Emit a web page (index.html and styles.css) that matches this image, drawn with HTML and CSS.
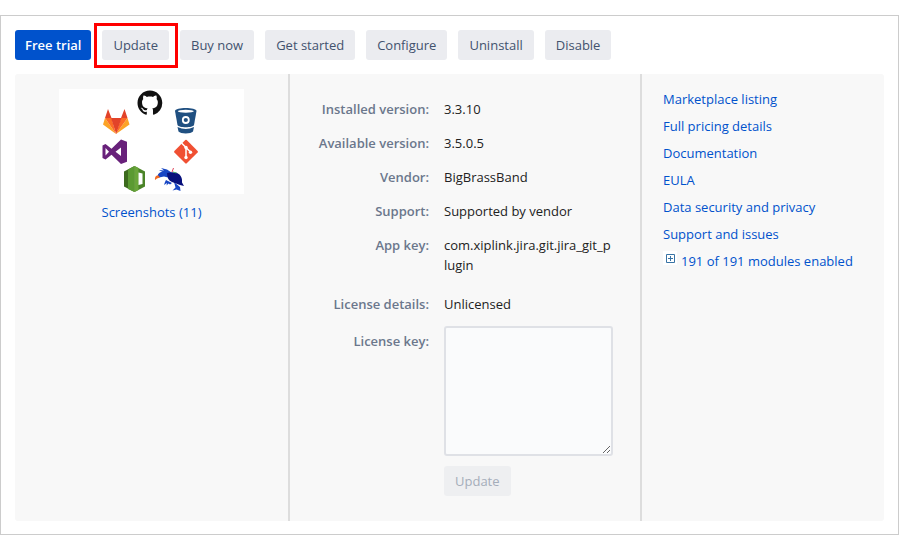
FILE: index.html
```html
<!DOCTYPE html>
<html lang="en">
<head>
<meta charset="utf-8">
<title>Manage app</title>
<link rel="stylesheet" href="styles.css">
</head>
<body>
<main class="app-card">
  <div class="toolbar">
    <button type="button" class="btn btn-primary">Free trial</button>
    <button type="button" class="btn btn-marked">Update</button>
    <button type="button" class="btn">Buy now</button>
    <button type="button" class="btn">Get started</button>
    <button type="button" class="btn">Configure</button>
    <button type="button" class="btn">Uninstall</button>
    <button type="button" class="btn">Disable</button>
  </div>
  <div class="panel">
    <section class="media">
      <svg class="logo" viewBox="0 0 185 105" role="img" aria-label="Git integrations">
        <rect width="185" height="105" fill="#fff"/>
        <path transform="translate(78.5 1.5) scale(1.55)" fill="#111" d="M8 0C3.58 0 0 3.58 0 8c0 3.54 2.29 6.53 5.47 7.59.4.07.55-.17.55-.38 0-.19-.01-.82-.01-1.49-2.01.37-2.53-.49-2.69-.94-.09-.23-.48-.94-.82-1.13-.28-.15-.68-.52-.01-.53.63-.01 1.08.58 1.23.82.72 1.21 1.87.87 2.33.66.07-.52.28-.87.51-1.07-1.78-.2-3.64-.89-3.64-3.95 0-.87.31-1.59.82-2.15-.08-.2-.36-1.02.08-2.12 0 0 .67-.21 2.2.82.64-.18 1.32-.27 2-.27s1.36.09 2 .27c1.53-1.04 2.2-.82 2.2-.82.44 1.1.16 1.92.08 2.12.51.56.82 1.27.82 2.15 0 3.07-1.87 3.75-3.65 3.95.29.25.54.73.54 1.48 0 1.07-.01 1.93-.01 2.2 0 .21.15.46.55.38A8.01 8.01 0 0 0 16 8c0-4.42-3.58-8-8-8z"/>
        <g>
          <path fill="#fca326" d="M46 29l-2 6.500 13 9.500zM68.500 29l2 6.500-13.500 9.500z"/>
          <path fill="#fc6d26" d="M46 29h6.500L57 45zM68.500 29H62l-5 16z"/>
          <path fill="#e24329" d="M52 29h10.500L57.200 45zM46 29l3-9 3.500 9zM68.500 29l-3-9-3.500 9z"/>
        </g>
        <g>
          <path fill="#205081" d="M116 22c0-4 21.500-4 21.500 0l-2.500 14c-1 3-15.500 3-16.500 0z"/>
          <ellipse cx="126.800" cy="22.300" rx="8" ry="1.500" fill="#fff"/>
          <circle cx="126.800" cy="31" r="3" fill="#205081" stroke="#fff" stroke-width="1.800"/>
          <path fill="#205081" d="M118.500 38q8.300 4 16.500 0l-1 4.500c-2 2.500-12.500 2.500-14.500 0z"/>
        </g>
        <path fill="#68217a" fill-rule="evenodd" d="M62 50.500l6 2.200v20l-6 2.300-9.500-9.200-6 4.700-3-1.500V56.500l3-1.500 6 4.700zM62 58.500l-5.500 4.300 5.500 4.200zM46.500 59v7.500l3.500-3.700z"/>
        <g>
          <rect x="-8.700" y="-8.700" width="17.400" height="17.400" rx="1" fill="#f05033" transform="translate(127 62.700) rotate(45)"/>
          <path d="M122.500 54l4.500 4.500v10M127 58.500l4.500 4.500" fill="none" stroke="#fff" stroke-width="1.500"/>
          <circle cx="127" cy="58.500" r="1.700" fill="#fff"/>
          <circle cx="131.500" cy="63.200" r="1.700" fill="#fff"/>
          <circle cx="127" cy="68.500" r="1.700" fill="#fff"/>
        </g>
        <g>
          <path fill="#3c6b1e" d="M65 82.500l10.500-5.500v26L65 97.500z"/>
          <path fill="#5b9a32" d="M69 80.500l6.500-3.500v26l-6.500-3z"/>
          <path fill="#4b8428" d="M75.500 77L86 82.500v15L75.500 103z"/>
          <path fill="#6aa63a" d="M75.500 77l4 2v22l-4 2z"/>
          <path fill="#fff" d="M79.500 83.500l4 1v10.500l-4 1z"/>
        </g>
        <g>
          <path fill="#1746c4" d="M98.500 88c0-3 2-5 5-5l-3.500-2 5 .5-3-2.500 6 1.500 6 4 4 8-5-1-4-3-4-1-5 1z"/>
          <path fill="#1746c4" d="M107 91l6 3-2 1.500-1.500-1-2 2 .5-2.500-3 2 1-3zM115 93l6 5 .5 4-4-1.500-4 1 3-3z"/>
          <path fill="#07107c" d="M108 84q9-2 12.500 1.500 3 3 2.500 8l2 3.500-4-1-8-3q-5-2-5-9z"/>
          <path fill="none" stroke="#e0475b" d="M113 83l1.500-4"/>
          <path fill="none" stroke="#46a86b" d="M114 83l3.500 1"/>
          <path fill="#f26a21" d="M96 91c-.5-3 1-5 3.500-4.500l1.500 2-3 1z"/>
        </g>
      </svg>
      <a href="#screenshots">Screenshots (11)</a>
    </section>
    <form class="details">
      <span class="term">Installed version:</span><span class="value">3.3.10</span>
      <span class="term">Available version:</span><span class="value">3.5.0.5</span>
      <span class="term">Vendor:</span><span class="value">BigBrassBand</span>
      <span class="term">Support:</span><span class="value">Supported by vendor</span>
      <span class="term">App key:</span><span class="value value-key">com.xiplink.jira.git.jira_git_plugin</span>
      <span class="term">License details:</span><span class="value">Unlicensed</span>
      <label class="term term-field" for="license">License key:</label>
      <div class="field">
        <textarea id="license"></textarea>
        <button type="button" class="btn" disabled>Update</button>
      </div>
    </form>
    <nav class="links">
      <a href="#listing">Marketplace listing</a>
      <a href="#pricing">Full pricing details</a>
      <a href="#docs">Documentation</a>
      <a href="#eula">EULA</a>
      <a href="#privacy">Data security and privacy</a>
      <a href="#support">Support and issues</a>
      <a href="#modules" class="modules">
        <svg class="expand" viewBox="0 0 14 14" aria-hidden="true">
          <rect width="14" height="14" fill="#fff"/>
          <path d="M3.500 3.500h8v8h-8zM5 7.500h5M7.500 5v5" fill="none" stroke="#3873a5"/>
        </svg>
        <span>191 of 191 modules enabled</span>
      </a>
    </nav>
  </div>
</main>
</body>
</html>
```
FILE: styles.css
```css
* {
  box-sizing: border-box;
}

body {
  margin: 15px 0 0;
  background: #fff;
  color: #222;
  font: 13px/20px "Open Sans", "Noto Sans", sans-serif;
}

a {
  color: #0052cc;
  text-decoration: none;
}

.app-card {
  padding: 14px 14px 13px;
  border: 1px solid #ccc;
}

.toolbar {
  display: flex;
  gap: 11px;
  margin-bottom: 14px;
}

.btn {
  height: 30px;
  padding: 0 11px;
  border: 0;
  border-radius: 3px;
  background: #ebecf0;
  color: #42526e;
  font: inherit;
}

.btn-primary {
  padding: 0 10px;
  background: #0052cc;
  color: #fff;
  font-weight: 600;
}

.btn-marked {
  position: relative;
}

.btn-marked::after {
  content: "";
  position: absolute;
  inset: -7px -9px -8px -8px;
  border: 3px solid #f00;
}

.btn:disabled {
  background: #eeeff1;
  color: #a5adba;
}

.panel {
  display: grid;
  grid-template-columns: 273fr 354fr 242fr;
  border-radius: 3px;
  background: #f8f8f8;
}

.media {
  display: flex;
  flex-direction: column;
  align-items: center;
  gap: 8px;
  padding: 15px;
}

.logo {
  width: 185px;
}

.details {
  display: grid;
  grid-template-columns: 139fr 169fr;
  align-content: start;
  column-gap: 15px;
  row-gap: 14px;
  padding: 25px 27px 25px 0;
  border: solid #ddd;
  border-width: 0 2px;
}

.term {
  color: #6b778c;
  font-weight: 600;
  text-align: right;
}

.value-key {
  margin-bottom: 5px;
  word-break: break-all;
}

.term-field {
  padding-top: 3px;
}

.field {
  display: flex;
  flex-direction: column;
  align-items: flex-start;
  gap: 10px;
  margin-top: -2px;
}

textarea {
  width: 100%;
  height: 130px;
  border: 2px solid #dfe1e6;
  border-radius: 3px;
  background: #fafbfc;
  font: inherit;
}

.links {
  display: flex;
  flex-direction: column;
  align-items: flex-start;
  gap: 7px;
  padding: 15px 0 15px 21px;
}

.modules {
  display: flex;
  gap: 4px;
}

.expand {
  width: 14px;
  height: 14px;
}
```
